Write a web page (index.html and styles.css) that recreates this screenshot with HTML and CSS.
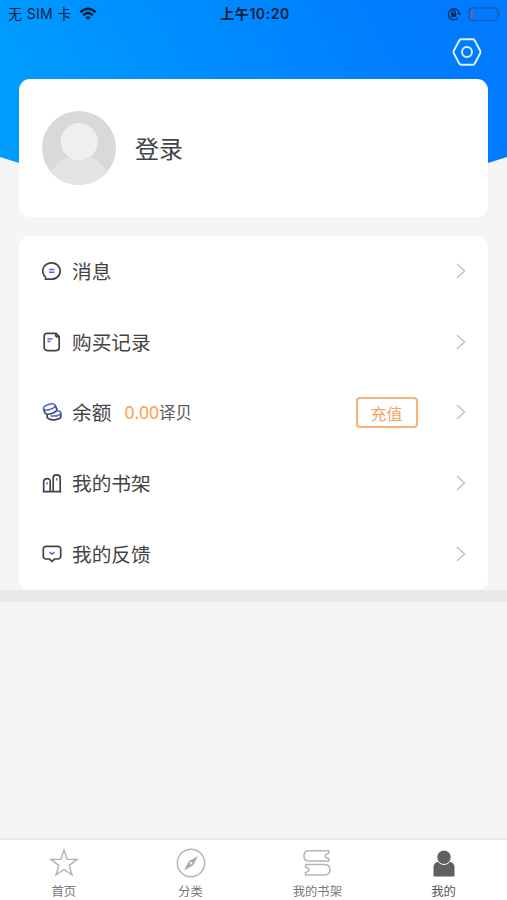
FILE: index.html
```html
<!DOCTYPE html>
<html lang="zh-CN">
<head>
<meta charset="utf-8">
<title>我的</title>
<link rel="stylesheet" href="styles.css">
</head>
<body>
<div class="app">
  <svg class="backdrop" viewBox="0 0 507 190" aria-hidden="true">
    <defs><linearGradient id="sky" gradientUnits="userSpaceOnUse" x1="70" y1="180" x2="400" y2="0"><stop offset="0" stop-color="#009cff"/><stop offset="1" stop-color="#007bff"/></linearGradient></defs>
    <path d="M0 0H507V157L488 163Q254 205 19 163L0 157Z" fill="url(#sky)"/>
  </svg>
  <header class="status">
    <div class="carrier"><span>无 SIM 卡</span>
      <svg width="18" height="14" viewBox="0 0 18 14" fill="none" stroke="#062039" stroke-width="2.5"><path d="M1.2 5.2Q9-1.8 16.8 5.2M4.1 8.2Q9 3.9 13.9 8.2"/><path d="M6.2 10.3Q9 8 11.8 10.3L9 13Z" fill="#062039" stroke="none"/></svg>
    </div>
    <div class="clock">上午10:20</div>
    <div class="power">
      <svg width="14" height="14" viewBox="0 0 14 14" fill="none" stroke="#062b55" stroke-width="1.3"><path d="M11 10.8A5.5 5.5 0 1 1 12.2 6"/><path d="M10.5 6H14L12.2 8.5Z" fill="#062b55" stroke="none"/><path d="M5 6.2V5a1.6 1.6 0 0 1 3.2 0v1.2"/><path d="M4 6h5.2v4H4z" fill="#062b55" stroke="none"/></svg>
      <svg width="33" height="14" viewBox="0 0 33 14" fill="none"><rect x="1.1" y=".8" width="28.5" height="12.6" rx="3.2" stroke="#1659a8" stroke-width="1.2"/><rect x="2.7" y="2.5" width="2.1" height="9.2" rx="1" fill="#8c5b91"/><path d="M31 4.7Q33 7 31 9.3Z" fill="#1659a8"/></svg>
    </div>
  </header>
  <div class="toolbar">
    <svg width="30" height="28" viewBox="0 0 30 28" fill="none" stroke="#e3f4ff" stroke-width="1.9" stroke-linejoin="round"><path d="M9.2 1.2H20.8Q22 1.2 22.6 2.2L28.2 12.8Q28.8 14 28.2 15.2L22.6 25.8Q22 26.8 20.8 26.8H9.2Q8 26.8 7.4 25.8L1.8 15.2Q1.2 14 1.8 12.8L7.4 2.2Q8 1.2 9.2 1.2Z"/><circle cx="15" cy="14" r="5"/></svg>
  </div>
  <section class="card profile">
    <svg class="avatar" viewBox="0 0 74 74"><defs><clipPath id="disc"><circle cx="37" cy="37" r="37"/></clipPath></defs><g clip-path="url(#disc)"><path d="M0 0h74v74H0z" fill="#d9d9d9"/><path d="M6 66Q14 50 26 46.5Q37 52 50 46.5Q60 50 68 66V74H6Z" fill="#e4e4e4"/><circle cx="37.3" cy="30.7" r="18.6" fill="#efefef"/></g></svg>
    <span class="login">登录</span>
  </section>
  <main class="card menu">
    <div class="row">
      <svg class="icon" viewBox="0 0 20 20"><path d="M4.2 16.6A8.7 8.2 0 1 1 10.4 18.2H3.4Q3.3 17.4 4.2 16.6"/><path class="accent" d="M7.2 8.4h5.2M7.2 11.3h5.2"/></svg>
      <span class="label">消息</span><svg class="chevron" viewBox="0 0 10 16"><path d="M1 1l7.5 7L1 15"/></svg>
    </div>
    <div class="row">
      <svg class="icon" viewBox="0 0 20 20"><path d="M4.8 1.4H14L17.2 4.6V15.6a3 3 0 0 1-3 3H5.2a3 3 0 0 1-3-3V4a2.6 2.6 0 0 1 2.6-2.6ZM13.7 1.6V3.6q0 1.2 1.2 1.2H17"/><path class="accent" d="M5.4 7h5M5.4 9.5h3"/></svg>
      <span class="label">购买记录</span><svg class="chevron" viewBox="0 0 10 16"><path d="M1 1l7.5 7L1 15"/></svg>
    </div>
    <div class="row">
      <svg class="icon" viewBox="0 0 20 20"><path d="M1.5 6.5L3 11Q5 13.4 10.4 11.2Q14.8 9.6 14.8 7.2L13 3M5.2 12.5V15.2Q7 18.2 12.8 17.8Q18.8 17.2 18.8 14.8V10.8"/><path class="accent" d="M1.5 6.5Q1 4.6 5.8 2.8Q11.8.6 13 3Q14 5.2 8.5 7.3Q2.8 9.3 1.5 6.5ZM14.5 8.8Q18.8 9 18.8 11Q18 14.6 8.5 14"/></svg>
      <span class="label">余额</span><span class="balance"><b>0.00</b>译贝</span><span class="recharge">充值</span><svg class="chevron" viewBox="0 0 10 16"><path d="M1 1l7.5 7L1 15"/></svg>
    </div>
    <div class="row">
      <svg class="icon" viewBox="0 0 20 20"><path d="M.7 18.7H19.3M1.7 18.4V8.4Q1.7 5.7 5 5.7T8.2 8.4V18.4M11.2 18.4V4.7Q11.2 1.8 14.7 1.8T18.2 4.7V18.4"/><path class="accent" d="M5 9.2v2.2M14.7 5.2v2.2"/></svg>
      <span class="label">我的书架</span><svg class="chevron" viewBox="0 0 10 16"><path d="M1 1l7.5 7L1 15"/></svg>
    </div>
    <div class="row">
      <svg class="icon" viewBox="0 0 20 20"><path d="M4 2.4h12a2.7 2.7 0 0 1 2.7 2.7v7.2a2.7 2.7 0 0 1-2.7 2.7h-3.3L10 17.4 7.3 15H4a2.7 2.7 0 0 1-2.7-2.7V5.1A2.7 2.7 0 0 1 4 2.4Z"/><path class="accent" d="M7.5 8L10 10.2l2.5-2.2"/></svg>
      <span class="label">我的反馈</span><svg class="chevron" viewBox="0 0 10 16"><path d="M1 1l7.5 7L1 15"/></svg>
    </div>
  </main>
  <div class="divider"></div>
  <nav class="tabs">
    <div class="tab"><svg viewBox="0 0 30 30"><path d="M15 2.2L18.2 11.3 28 11.5 20.2 17.4 23 27 15 21.4 7 27 9.8 17.4 2 11.5 11.8 11.3Z"/></svg><span>首页</span></div>
    <div class="tab"><svg viewBox="0 0 30 30"><circle cx="15" cy="15" r="13.7"/><path d="M22 8L17.2 17.2 8 22.5 12.8 13.2Z" fill="#aaa" stroke="none"/><circle cx="15" cy="15.2" r="1.8" fill="#fff" stroke="#aaa" stroke-width="1"/></svg><span>分类</span></div>
    <div class="tab"><svg viewBox="0 0 30 30"><path d="M27.5 2.8H7Q2 2.8 2 8T7 13.1H27.5M26.8 2.8V5.2Q23 6.2 23 8T26.8 10.6V13M3 16.6H22Q28 16.6 28 21.8T22 27H3M3.5 16.6V18.8Q6.8 20 6.8 21.8T3.5 24.6V27"/></svg><span>我的书架</span></div>
    <div class="tab active"><svg viewBox="0 0 30 30"><path d="M4.5 28.5V19Q5 14.3 9.5 13.5Q15 18.5 20.5 13.5Q25 14.3 25.5 19V28.5Z" fill="#606060" stroke="none"/><circle cx="15" cy="9.3" r="7.2" fill="#606060" stroke="#fff" stroke-width="1"/></svg><span>我的</span></div>
  </nav>
</div>
</body>
</html>
```

FILE: styles.css
```css
* { box-sizing: border-box; }
body { margin: 0; background: #f5f5f5; font-family: "Noto Sans CJK SC", sans-serif; }
svg { display: block; flex: none; }
.app { position: relative; isolation: isolate; display: flex; flex-direction: column; width: 507px; height: 900px; overflow: hidden; }
.backdrop { position: absolute; z-index: -1; inset: 0 0 auto; width: 507px; height: 190px; }
.status { display: grid; grid-template-columns: 1fr auto 1fr; align-items: center; height: 28px; padding: 0 6px 0 8px; color: #062039; font: 500 14px/28px Inter, "Noto Sans CJK SC", sans-serif; }
.carrier { display: flex; align-items: center; gap: 7px; font-weight: 400; letter-spacing: .35px; white-space: nowrap; }
.clock { padding-left: 1px; font-weight: 600; letter-spacing: .55px; }
.power { display: flex; justify-content: flex-end; align-items: center; gap: 7px; }
.toolbar { display: flex; justify-content: flex-end; height: 51px; padding: 10px 25px 0 0; }
.card { flex: none; margin: 0 19px; background: #fff; border-radius: 11px; }
.profile { display: flex; align-items: center; gap: 19px; height: 137.5px; padding: 0 23px; }
.avatar { width: 74px; height: 74px; }
.login { font-size: 24px; line-height: 36px; color: #444; }
.menu { display: grid; grid-template-rows: repeat(5, 1fr); height: 354px; margin-top: 19.5px; padding: 0 22.5px 0 23px; }
.row { display: flex; align-items: center; padding-bottom: 1px; }
.icon { width: 20px; height: 20px; margin-right: 10px; fill: none; stroke: #414348; stroke-width: 1.7; stroke-linejoin: round; }
.icon .accent { stroke: #4965df; stroke-width: 1.5; }
.label { font-size: 19.7px; line-height: 30px; color: #444; }
.chevron { width: 10px; height: 16px; margin-left: auto; fill: none; stroke: #bec1ca; stroke-width: 1.5; }
.balance { margin-left: 13px; font-size: 16.5px; line-height: 26px; color: #5a5a5a; }
.balance b { font: 400 17.5px/26px "Noto Sans", sans-serif; color: #ff9d48; }
.recharge { width: 62px; height: 31px; margin-left: auto; border: 2px solid #fbb277; border-radius: 4px; color: #f5a366; font-size: 16px; line-height: 28px; text-align: center; }
.recharge + .chevron { margin-left: 38px; }
.divider { flex: none; height: 12px; background: #e9e9e9; }
.tabs { display: grid; grid-template-columns: repeat(4, 1fr); height: 60px; margin-top: auto; background: #fff; box-shadow: 0 -1px 2px #dedede; }
.tab { display: flex; flex-direction: column; align-items: center; padding: 8px 0 0 1px; color: #777; font-size: 12.3px; line-height: 18px; }
.tab svg { width: 30px; height: 30px; margin-bottom: 4px; fill: none; stroke: #b5b5b5; stroke-width: 1.5; }
.tab.active { padding-left: 0; color: #555; }
```
